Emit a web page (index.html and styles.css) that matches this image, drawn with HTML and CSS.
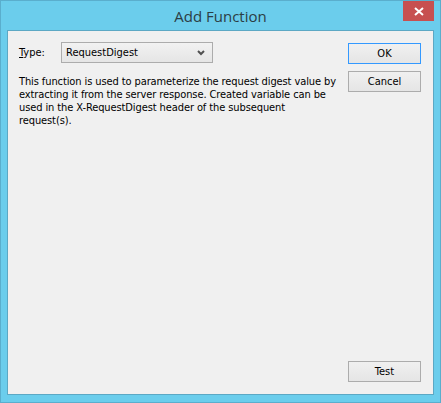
FILE: index.html
```html
<!DOCTYPE html>
<html lang="en">
<head>
    <meta charset="UTF-8">
    <title>Add Function</title>
    <link rel="stylesheet" href="styles.css">
</head>
<body>
    <div class="window">
        <div class="titlebar">
            <span class="title">Add Function</span>
            <button class="close" title="Close">
                <svg width="10" height="9" viewBox="0 0 10 9">
                    <path d="M1 1 L9 8 M9 1 L1 8" stroke="#fff" stroke-width="2"/>
                </svg>
            </button>
        </div>

        <div class="client">
            <div class="main">
                <div class="type-row">
                    <label for="type"><u>T</u>ype:</label>
                    <div class="select" id="type">
                        <span>RequestDigest</span>
                        <svg width="8" height="6" viewBox="0 0 8 6">
                            <path d="M1 1 L4 4 L7 1" stroke="#505050" stroke-width="2" fill="none"/>
                        </svg>
                    </div>
                </div>
                <p class="description">
                    This function is used to parameterize the request digest value by<br>
                    extracting it from the server response. Created variable can be<br>
                    used in the X-RequestDigest header of the subsequent<br>
                    request(s).
                </p>
            </div>

            <!-- dialog buttons -->
            <div class="actions">
                <button class="btn default">OK</button>
                <button class="btn">Cancel</button>
                <button class="btn test">Test</button>
            </div>
        </div>
    </div>
</body>
</html>
```

FILE: styles.css
```css
body {
    margin: 0;
    padding: 0;
    font-family: 'DejaVu Sans Condensed', 'DejaVu Sans', sans-serif;
    font-size: 11px;
    color: #000;
}

.window {
    width: 441px;
    height: 403px;
    box-sizing: border-box;
    border: 1px solid #5aaecd;
    background-color: #6bcdec;
    display: flex;
    flex-direction: column;
}

.titlebar {
    position: relative;
    height: 29px;
    display: flex;
    align-items: center;
    justify-content: center;
}

.title {
    font-family: 'Open Sans', 'Noto Sans', sans-serif;
    font-size: 15px;
    color: #2c3d44;
    margin-top: 1px;
}

.close {
    position: absolute;
    top: 0;
    right: 6px;
    width: 31px;
    height: 20px;
    padding: 0;
    border: none;
    background-color: #c75050;
    display: flex;
    align-items: center;
    justify-content: center;
}

.client {
    flex: 1;
    margin: 0 6px 7px;
    border: 1px solid #5ca8c4;
    background-color: #f0f0f0;
    display: flex;
    padding: 11px 12px 12px 11px;
}

.main {
    flex: 1;
    min-width: 0;
}

.type-row {
    display: flex;
    align-items: center;
}

.type-row label {
    width: 42px;
}

.select {
    width: 139px;
    height: 19px;
    border: 1px solid #acacac;
    background: linear-gradient(#f2f2f2, #e5e5e5);
    display: flex;
    align-items: center;
    justify-content: space-between;
    padding: 0 7px 0 4px;
}

.description {
    margin: 12px 0 0;
    line-height: 13px;
    white-space: nowrap;
    letter-spacing: -0.1px;
}

.actions {
    display: flex;
    flex-direction: column;
    gap: 7px;
    padding-top: 1px;
}

.btn {
    width: 73px;
    height: 21px;
    font-family: inherit;
    font-size: 11px;
    color: #000;
    border: 1px solid #acacac;
    background: linear-gradient(#f0f0f0, #e5e5e5);
    padding: 0;
}

.btn.default {
    border-color: #3399ff;
}

.btn.test {
    margin-top: auto;
}
```
